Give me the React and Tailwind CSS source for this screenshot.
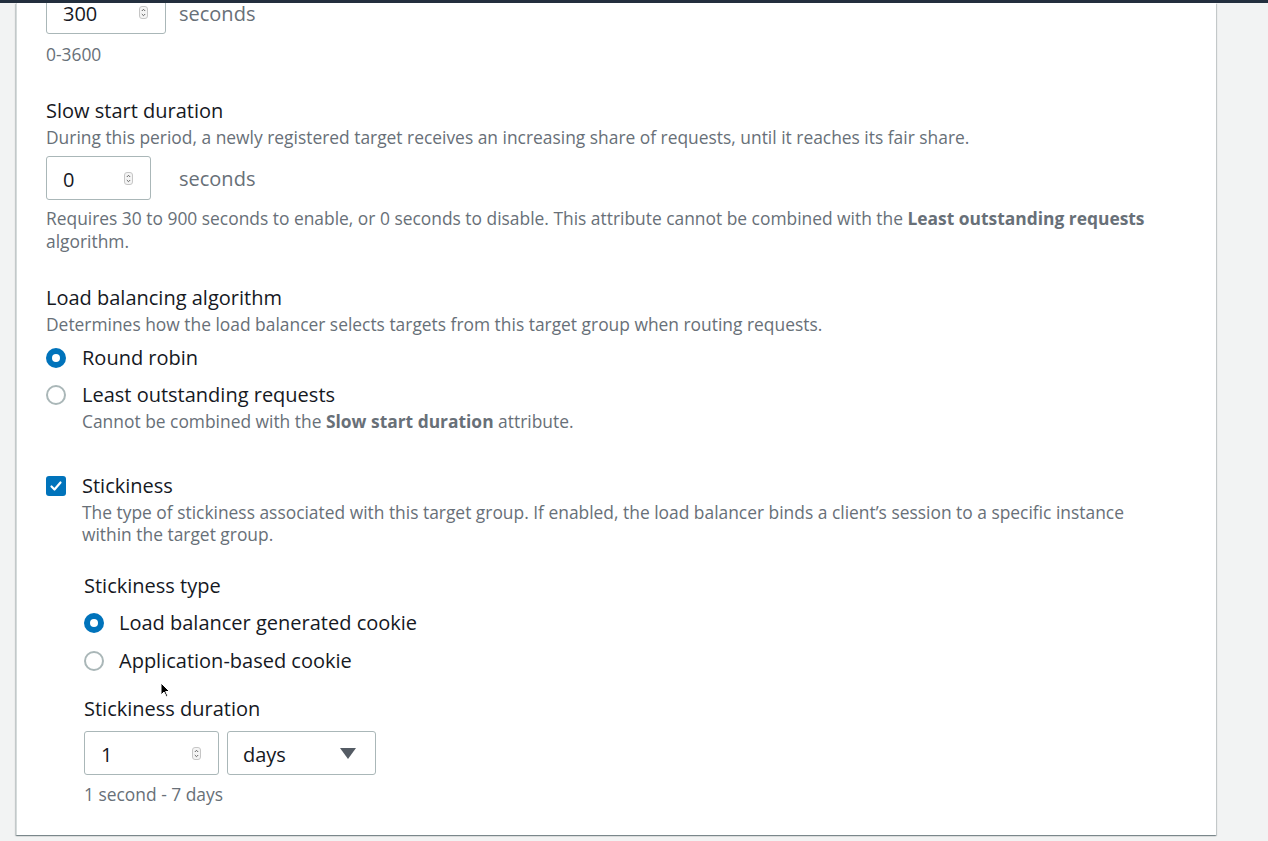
import React from "react";

const font = { fontFamily: '"Open Sans", "Noto Sans", sans-serif' };

const Spinner = () => (
  <svg width="9" height="13" viewBox="0 0 9 13" className="shrink-0">
    <rect x="0.5" y="0.5" width="8" height="12" rx="2.5" fill="#f4f4f4" stroke="#c6c6c6" />
    <path d="M2.8 5 L4.5 3.3 L6.2 5" fill="none" stroke="#555" strokeWidth="0.9" />
    <path d="M2.8 8 L4.5 9.7 L6.2 8" fill="none" stroke="#555" strokeWidth="0.9" />
  </svg>
);

const NumberInput = ({ value, width }) => (
  <div className={`${width} h-[44px] border border-[#aab7b8] rounded-[3px] flex items-center justify-between pl-4 pr-[17px] bg-white`}>
    <span className="pt-[3px] text-[20px] text-[#16191f]">{value}</span>
    <Spinner />
  </div>
);

const Radio = ({ checked }) =>
  checked ? (
    <span className="w-[20px] h-[20px] rounded-full bg-[#0073bb] flex items-center justify-center shrink-0">
      <span className="w-[8px] h-[8px] rounded-full bg-white" />
    </span>
  ) : (
    <span className="w-[20px] h-[20px] rounded-full border-2 border-[#aab7b8] bg-white shrink-0" />
  );

const RadioRow = ({ checked, label, className }) => (
  <div className={`h-[28px] flex items-center gap-4 ${className}`}>
    <Radio checked={checked} />
    <span className="text-[20px] text-[#16191f]">{label}</span>
  </div>
);

const App = () => {
  return (
    <div className="min-h-screen bg-[#f2f3f3] relative overflow-hidden" style={font}>
      <div className="relative z-10 h-[3px] bg-[#232f3e]" />

      <div className="flow-root ml-[16px] w-[1200px] bg-white border-l border-[#d5dbdb] shadow-[0_1px_1px_0_rgba(0,28,36,0.3),1px_1px_1px_0_rgba(0,28,36,0.15),-1px_1px_1px_0_rgba(0,28,36,0.15)] pl-[29px] pr-6 pb-[30px]">
        <div className="-mt-[13px] h-[44px] flex items-center">
          <NumberInput value="300" width="w-[120px]" />
          <span className="ml-[13px] mt-[3px] text-[20px] text-[#687078]">seconds</span>
        </div>
        <div className="mt-[9px] text-[17.4px] leading-[22px] text-[#687078]">0-3600</div>

        <div className="mt-[34px] text-[20px] leading-[24px] text-[#16191f]">Slow start duration</div>
        <div className="mt-[3px] text-[17.4px] leading-[22px] text-[#687078]">
          During this period, a newly registered target receives an increasing share of requests, until it reaches its fair share.
        </div>
        <div className="mt-[8px] h-[44px] flex items-center">
          <NumberInput value="0" width="w-[105px]" />
          <span className="ml-[28px] mt-[2px] text-[20px] text-[#687078]">seconds</span>
        </div>
        <div className="mt-[7px] text-[17.4px] leading-[23px] text-[#687078] max-w-[1110px]">
          Requires 30 to 900 seconds to enable, or 0 seconds to disable. This attribute cannot be combined with the{" "}
          <span className="font-bold">Least outstanding requests</span> algorithm.
        </div>

        <div className="mt-[33px] text-[20px] leading-[24px] text-[#16191f]">Load balancing algorithm</div>
        <div className="mt-[3px] text-[17.4px] leading-[22px] text-[#687078]">
          Determines how the load balancer selects targets from this target group when routing requests.
        </div>
        <RadioRow checked label="Round robin" className="mt-[9px]" />
        <RadioRow checked={false} label="Least outstanding requests" className="mt-[9px]" />
        <div className="ml-[36px] mt-[1px] text-[17.4px] leading-[22px] text-[#687078]">
          Cannot be combined with the <span className="font-bold">Slow start duration</span> attribute.
        </div>

        <div className="mt-[40px] h-[28px] flex items-center gap-4">
          <span className="w-[20px] h-[20px] rounded-[3px] bg-[#0073bb] flex items-center justify-center shrink-0">
            <svg width="14" height="14" viewBox="0 0 14 14">
              <path d="M2.5 7.5 L5.5 10.5 L11.5 3.5" fill="none" stroke="white" strokeWidth="2.2" strokeLinecap="round" strokeLinejoin="round" />
            </svg>
          </span>
          <span className="text-[20px] text-[#16191f]">Stickiness</span>
        </div>
        <div className="ml-[36px] mt-[1px] text-[17.4px] leading-[22px] text-[#687078] max-w-[1065px]">
          The type of stickiness associated with this target group. If enabled, the load balancer binds a client’s session to a specific instance within the target group.
        </div>

        <div className="ml-[38px]">
          <div className="mt-[29px] text-[20px] leading-[24px] text-[#16191f]">Stickiness type</div>
          <RadioRow checked label="Load balancer generated cookie" className="mt-[11px] gap-[15px]" />
          <RadioRow checked={false} label="Application-based cookie" className="mt-[10px] gap-[15px]" />

          <div className="mt-[22px] text-[20px] leading-[24px] text-[#16191f]">Stickiness duration</div>
          <div className="mt-[10px] flex gap-[8px]">
            <NumberInput value="1" width="w-[135px]" />
            <div className="w-[149px] h-[44px] border border-[#aab7b8] rounded-[3px] flex items-center justify-between pl-[15px] pr-[19px]">
              <span className="pt-[3px] text-[20px] text-[#16191f]">days</span>
              <svg width="16" height="11" viewBox="0 0 16 11">
                <path d="M0 0 H16 L8 11 Z" fill="#545b64" />
              </svg>
            </div>
          </div>
          <div className="mt-[8px] text-[17.4px] leading-[22px] text-[#687078]">1 second - 7 days</div>
        </div>
      </div>

      <svg className="absolute left-[160px] top-[682px]" width="11" height="16" viewBox="0 0 11 16">
        <path d="M1 1 L1 13 L4 10 L6.5 15 L8 14.3 L5.7 9.5 L9.5 9.5 Z" fill="black" stroke="white" strokeWidth="1" />
      </svg>
    </div>
  );
};

export default App;
